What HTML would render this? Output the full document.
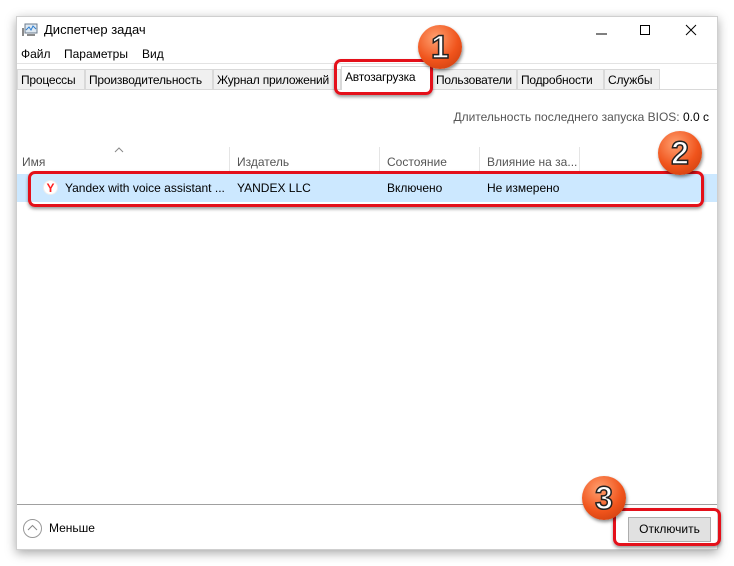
<!DOCTYPE html>
<html><head><meta charset="utf-8"><style>
*{box-sizing:border-box;margin:0;padding:0}
body{width:734px;height:566px;background:#fff;font-family:"Liberation Sans",sans-serif;font-size:12px;color:#000;position:relative;overflow:hidden}
.win{position:absolute;left:16px;top:16px;width:702px;height:534px;background:#fff;border:1px solid #cfcfcf;box-shadow:0 3px 10px rgba(0,0,0,.35)}
.a{position:absolute;white-space:nowrap}
.tab{position:absolute;top:52px;height:21px;background:#f0f0f0;border:1px solid #d9d9d9;padding:3px 3px;font-size:12px;letter-spacing:-0.2px;color:#000;white-space:nowrap;overflow:hidden}
.hdr{color:#555;font-size:12px}
.sep{position:absolute;top:130px;width:1px;height:26px;background:#e5e5e5}
.red{position:absolute;border:3px solid #e4101a;border-radius:7px;box-shadow:0 2px 3px rgba(0,0,0,.4)}
.badge{position:absolute;width:44px;height:44px;border-radius:50%;background:radial-gradient(circle at 40% 30%,#ffa070,#f0541c 55%,#c2380b);box-shadow:1px 2px 3px rgba(0,0,0,.45);text-align:center;line-height:44px;font-weight:bold;font-size:32px;color:#fff;-webkit-text-stroke:1.5px #222;font-family:"Liberation Sans",sans-serif}
</style></head><body>
<div class="win">
 <svg class="a" style="left:5px;top:6px" width="16" height="14" viewBox="0 0 16 14"><rect x="3" y="1" width="12" height="9" fill="#dfe9f2" stroke="#6b7b8c"/><polyline points="4,7 7,4 9,7 11,3 14,6" fill="none" stroke="#2f7fd0"/><rect x="0" y="5" width="2" height="8" fill="#8a8a8a"/><rect x="5" y="11" width="8" height="2" fill="#8a8a8a"/></svg>
 <div class="a" style="left:27px;top:5px;font-size:13px">Диспетчер задач</div>
 <svg class="a" style="left:579px;top:5px" width="110" height="16"><line x1="0" y1="12" x2="11" y2="12" stroke="#000"/><rect x="44.5" y="3.5" width="9" height="9" fill="none" stroke="#000"/><path d="M90 3l10 10M100 3l-10 10" stroke="#000"/></svg>
 <div class="a" style="left:4px;top:30px;font-size:12px">Файл</div>
 <div class="a" style="left:47px;top:30px;font-size:12px">Параметры</div>
 <div class="a" style="left:125px;top:30px;font-size:12px">Вид</div>
 <div class="a" style="left:0;top:46px;width:700px;height:1px;background:#e3e3e3"></div>
 <div class="a" style="left:0;top:72px;width:700px;height:1px;background:#d9d9d9"></div>
 <div class="tab" style="left:0;width:68px">Процессы</div>
 <div class="tab" style="left:68px;width:128px">Производительность</div>
 <div class="tab" style="left:196px;width:128px">Журнал приложений</div>
 <div class="tab" style="left:324px;top:49px;height:24px;width:91px;background:#fff;border-bottom:none">Автозагрузка</div>
 <div class="tab" style="left:415px;width:85px">Пользователи</div>
 <div class="tab" style="left:500px;width:87px">Подробности</div>
 <div class="tab" style="left:587px;width:56px">Службы</div>
 <div class="a" style="right:8px;top:93px;font-size:12px;color:#555">Длительность последнего запуска BIOS: <span style="color:#000">0.0 с</span></div>
 <svg class="a" style="left:97px;top:130px" width="10" height="6"><polyline points="1,5 5,1 9,5" fill="none" stroke="#888"/></svg>
 <div class="a hdr" style="left:5px;top:138px">Имя</div>
 <div class="a hdr" style="left:220px;top:138px">Издатель</div>
 <div class="a hdr" style="left:370px;top:138px">Состояние</div>
 <div class="a hdr" style="left:470px;top:138px">Влияние на за...</div>
 <div class="sep" style="left:212px"></div><div class="sep" style="left:362px"></div><div class="sep" style="left:462px"></div><div class="sep" style="left:562px"></div>
 <div class="a" style="left:0;top:157px;width:700px;height:28px;background:#cce8ff"></div>
 <div class="a" style="left:26px;top:163px;width:15px;height:15px;border-radius:50%;background:#fff;border:1px solid #eee;color:#f22;font-weight:bold;font-size:12px;line-height:14px;text-align:center">Y</div>
 <div class="a" style="left:48px;top:164px;font-size:12px">Yandex with voice assistant ...</div>
 <div class="a" style="left:220px;top:164px;font-size:12px">YANDEX LLC</div>
 <div class="a" style="left:370px;top:164px;font-size:12px">Включено</div>
 <div class="a" style="left:470px;top:164px;font-size:12px">Не измерено</div>
 <div class="a" style="left:0;top:487px;width:700px;height:1px;background:#a0a0a0"></div>
 <div class="a" style="left:6px;top:502px;width:19px;height:19px;border-radius:50%;border:1px solid #999"></div>
 <svg class="a" style="left:10px;top:507px" width="11" height="8"><polyline points="1,6 5.5,1.5 10,6" fill="none" stroke="#888"/></svg>
 <div class="a" style="left:32px;top:504px;font-size:12px">Меньше</div>
 <div class="a" style="left:611px;top:500px;width:83px;height:25px;background:#e1e1e1;border:1px solid #adadad;text-align:center;line-height:23px;font-size:12px">Отключить</div>
</div>
<div class="red" style="left:334px;top:59px;width:99px;height:36px"></div>
<div class="red" style="left:28px;top:171px;width:676px;height:36px"></div>
<div class="red" style="left:613px;top:508px;width:108px;height:38px"></div>
<div class="badge" style="left:418px;top:25px">1</div>
<div class="badge" style="left:658px;top:131px">2</div>
<div class="badge" style="left:582px;top:476px">3</div>
</body></html>
